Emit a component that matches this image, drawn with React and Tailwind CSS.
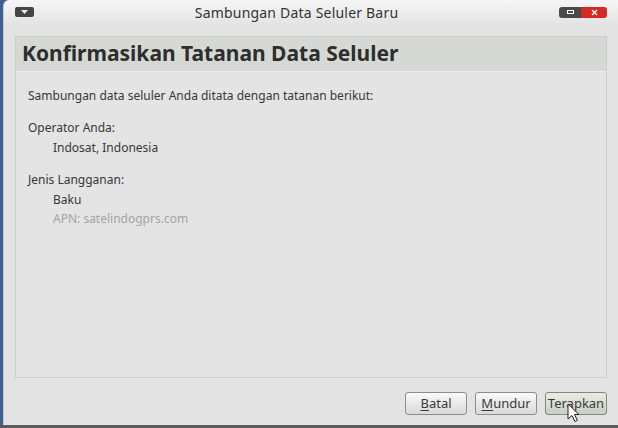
import React from "react";

const sans = { fontFamily: '"Noto Sans", "Open Sans", sans-serif' };

function Btn({ children, active }) {
  return (
    <button
      className={
        "h-[23px] w-[62px] rounded-[3px] border text-[13px] text-[#3a3a3a] leading-none " +
        (active
          ? "border-[#7f8a78] bg-gradient-to-b from-[#e9ece5] to-[#c9cfc2]"
          : "border-[#8c8c8c] bg-gradient-to-b from-[#fafafa] to-[#d9d9d9]")
      }
    >
      {children}
    </button>
  );
}

export default function App() {
  return (
    <div className="w-[618px] h-[428px] bg-[#3d5f92] flex flex-col overflow-hidden" style={sans}>
      <div className="flex-1 ml-[3px] rounded-tl-[6px] bg-[#e3e3e3] flex flex-col border-l border-[#c8ccd2]">
        {/* title bar */}
        <div className="h-[24px] flex items-center px-[11px] rounded-tl-[6px] bg-gradient-to-b from-[#f6f6f6] to-[#e4e4e4]">
          <div className="w-[19px] h-[10px] rounded-[2px] bg-[#454545] flex items-center justify-center">
            <svg width="7" height="4" viewBox="0 0 7 4"><path d="M0 0h7L3.5 4z" fill="#eee" /></svg>
          </div>
          <div className="flex-1 text-center text-[14px] tracking-[0.2px] text-[#333]">Sambungan Data Seluler Baru</div>
          <div className="flex h-[11px] w-[48px] rounded-[3px] overflow-hidden">
            <div className="w-[22px] bg-[#4a4a4a] flex items-center justify-center">
              <div className="w-[7px] h-[4px] border border-white" />
            </div>
            <div className="flex-1 bg-[#d42a22] flex items-center justify-center">
              <svg width="7" height="7" viewBox="0 0 7 7"><path d="M1 1l5 5M6 1L1 6" stroke="#fff" strokeWidth="1.4" /></svg>
            </div>
          </div>
        </div>

        {/* body */}
        <div className="flex-1 flex flex-col px-[11px] pt-[12px]">
          <div className="h-[342px] border border-[#cdcdcd] flex flex-col">
            <div className="h-[34px] bg-[#d6d9d3] flex items-center px-[6px]">
              <span className="text-[21px] font-bold text-[#2e2e2e]">Konfirmasikan Tatanan Data Seluler</span>
            </div>
            <div className="flex-1 bg-[#e4e4e4] border-t border-[#ececec] px-[12px] pt-[15px] text-[12px] text-[#383838] leading-[18px]">
              <div>Sambungan data seluler Anda ditata dengan tatanan berikut:</div>
              <div className="mt-[14px]">Operator Anda:</div>
              <div className="pl-[25px] mt-[2px]">Indosat, Indonesia</div>
              <div className="mt-[14px]">Jenis Langganan:</div>
              <div className="pl-[25px] mt-[2px]">Baku</div>
              <div className="pl-[25px] mt-[1px] text-[#a3a3a3]">APN: satelindogprs.com</div>
            </div>
          </div>

          <div className="flex justify-end gap-[8px] mt-[14px] relative">
            <Btn><span className="underline underline-offset-2">B</span>atal</Btn>
            <Btn><span className="underline underline-offset-2">M</span>undur</Btn>
            <Btn active>Terapkan</Btn>
            <svg className="absolute left-[552px] top-[11px]" width="13" height="20" viewBox="0 0 13 20">
              <path d="M1 1v15l4-3.5 3 6 2.5-1.2-3-5.8H12z" fill="#fff" stroke="#222" strokeWidth="1" strokeLinejoin="round" />
            </svg>
          </div>
        </div>
      </div>
      <div className="h-[3px] bg-[#5a5a5a]" />
    </div>
  );
}
